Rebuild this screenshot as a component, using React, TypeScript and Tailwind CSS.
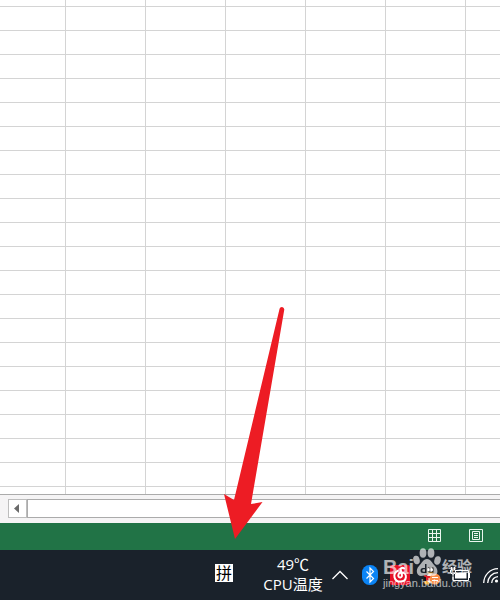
import React from 'react';

const rows = [...Array(22)].map((_, i) => (i === 0 || i === 21 ? 'h-[7px]' : 'h-6'));

function SheetGrid() {
  return (
    <table aria-label="Sheet" className="w-full table-fixed border-separate border-spacing-0 bg-white">
      <colgroup>
        <col className="w-[66px]" />
        {[...Array(5)].map((_, i) => (
          <col key={i} className="w-20" />
        ))}
        <col />
      </colgroup>
      <tbody>
        {rows.map((height, r) => (
          <tr key={r}>
            {[...Array(7)].map((_, c) => (
              <td
                key={c}
                className={`p-0 border-[#d4d4d4] ${height} ${r < 21 ? 'border-b' : ''} ${c < 6 ? 'border-r' : ''}`}
              />
            ))}
          </tr>
        ))}
      </tbody>
    </table>
  );
}

function ScrollRow() {
  return (
    <div className="flex border-t border-[#ababab] bg-[#f5f4f5] pt-1 pb-[5px] pl-2">
      <button
        type="button"
        aria-label="Scroll left"
        className="flex h-[19px] w-[19px] items-center justify-center border border-[#bdbdbd] bg-white pr-0.5"
      >
        <svg width="5" height="9" viewBox="0 0 5 9" fill="#6a6a6a">
          <path d="M5 0v9L0 4.5z" />
        </svg>
      </button>
      <div className="h-[19px] flex-1 border border-r-0 border-[#ababab] bg-white" />
    </div>
  );
}

function StatusBar() {
  return (
    <div className="flex h-[27px] items-start justify-end gap-7 bg-[#217346] pt-1.5 pr-[17px]">
      <button type="button" aria-label="Normal view">
        <svg width="13" height="13" viewBox="0 0 13 13" fill="none" stroke="#eaf6ee">
          <path d="M.5.5h12v12H.5zM4.5 0v13M8.5 0v13M0 4.5h13M0 8.5h13" />
        </svg>
      </button>
      <button type="button" aria-label="Page layout view">
        <svg width="14" height="13" viewBox="0 0 14 13" fill="none" stroke="#eaf6ee">
          <path d="M.5.5h13v12H.5zM3.5 2.5h7v8h-7zM5 4.5h4M5 6.5h4M5 8.5h4" />
        </svg>
      </button>
    </div>
  );
}

function Watermark() {
  return (
    <div className="pointer-events-none absolute right-7 bottom-[11px] w-[89px] text-white opacity-65">
      <div className="flex items-end font-['Liberation_Sans','Noto_Sans_CJK_SC',sans-serif] font-bold">
        <span className="w-[29px] text-xl leading-5">Bai</span>
        <svg width="30" height="30" viewBox="0 0 30 30" fill="currentColor">
          <ellipse cx="11" cy="6" rx="3.4" ry="4.7" />
          <ellipse cx="19" cy="6" rx="3.4" ry="4.7" />
          <ellipse cx="4.5" cy="13" rx="3.2" ry="4.3" transform="rotate(-15 4.5 13)" />
          <ellipse cx="25.5" cy="13.5" rx="3.2" ry="4.3" transform="rotate(15 25.5 13.5)" />
          <path
            fillRule="evenodd"
            d="M15 12c-4 0-5 4-8 7-4 4-2 10 2 10 3 0 3-1 6-1s3 1 6 1c5 0 6-6 2-10-3-3-4-7-8-7zM13 17h1.500v9H11a2.500 2.500 0 0 1 0-5h2zm0 5.300h-1.500a1.200 1.200 0 0 0 0 2.400H13zM16 20.500h1.500v4.200H20v-4.200h1.500V26H18a2 2 0 0 1-2-2z"
          />
        </svg>
        <span className="text-[15px] leading-5">经验</span>
      </div>
      <div className="font-['Liberation_Sans',sans-serif] text-[11px] leading-3">jingyan.baidu.com</div>
    </div>
  );
}

function TrayIcons() {
  return (
    <>
      <button type="button" aria-label="Show hidden icons" className="mt-5 ml-[9px]">
        <svg width="16" height="10" viewBox="0 0 16 10" fill="none" stroke="#fff" strokeWidth="1.3">
          <path d="M.5 9 8 1.5 15.5 9" />
        </svg>
      </button>
      <button type="button" aria-label="Bluetooth" className="mt-[15px] ml-3.5">
        <svg width="16" height="20" viewBox="0 0 16 20">
          <rect width="16" height="20" rx="7.5" fill="#0b84f5" />
          <path d="M4.5 6.5l7 7L8 17V3l3.5 3.5-7 7" fill="none" stroke="#fff" strokeWidth="1.2" />
        </svg>
      </button>
      <button type="button" aria-label="Music" className="mt-[15px] ml-3">
        <svg width="20" height="20" viewBox="0 0 20 20">
          <rect width="20" height="20" rx="2" fill="#e60f26" />
          <path
            d="M14 3.500c-1.500-1.300-3.500-.5-3.300 1.200l1.200 5.300c.6 3-3.600 3.300-3.600.5 0-2.300 2-3.300 4-3.100 5 .5 5.200 9.200-1.900 9.200-6.600 0-8.200-8.200-2.700-10.800"
            fill="none"
            stroke="#fff"
            strokeWidth="2"
            strokeLinecap="round"
          />
        </svg>
      </button>
      <button type="button" aria-label="Messages" className="mt-[15px] ml-3">
        <svg width="20" height="20" viewBox="0 0 20 20">
          <ellipse cx="8.5" cy="12" rx="6.5" ry="6.5" fill="#151515" />
          <ellipse cx="8.5" cy="6.5" rx="5" ry="5.5" fill="#151515" />
          <ellipse cx="8" cy="13.5" rx="4" ry="4.5" fill="#f4f4f4" />
          <ellipse cx="6.5" cy="4.7" rx="1.2" ry="1.7" fill="#fff" />
          <ellipse cx="9.8" cy="4.7" rx="1.2" ry="1.7" fill="#fff" />
          <path d="M4.5 7.5h7.5L8.2 9.5z" fill="#f6a623" />
          <path d="M2.5 9.5c3 2 8 2 11.5 0v2.3c-2.5 1.500-5.500 1.700-7.500 1.200v2.500H4v-3.300l-2-.7z" fill="#e3202b" />
          <path d="M2 17.5c1-2 4-2 5 .5v1.5H3z" fill="#f6a623" />
          <circle cx="13" cy="14" r="5.5" fill="#f98c45" />
          <path d="M10 12.500h6M10 15.500h6" stroke="#fff" strokeWidth="1.2" />
        </svg>
      </button>
      <button type="button" aria-label="Battery" className="mt-[17px] ml-2">
        <svg width="20" height="15" viewBox="0 0 20 15">
          <path d="M3 3.5h15.500v10H3z" fill="#1a222b" stroke="#fff" />
          <path d="M19 6h1v5h-1zM5 5.500h11.500v6H5z" fill="#fff" />
          <path d="M0 2.5h6V6L4.5 7.5V10h-3V7.5L0 6z" fill="#1a222b" />
          <path d="M1.5 0v3M4.5 0v3M.5 3h5v2.5L4 7H2L.5 5.5zM3 7v6.5" fill="none" stroke="#fff" />
        </svg>
      </button>
      <button type="button" aria-label="Wi-Fi" className="mt-[18px] ml-[13px]">
        <svg width="17" height="15" viewBox="0 0 17 15" fill="none" stroke="#fff" strokeWidth="1.3">
          <path d="M.7 15C1 7 7 .8 15 .7M4.700 15C5 9 9 4.900 15 4.700M8.700 15c.3-3.500 3-6 6.300-6.300" />
          <circle cx="13.5" cy="13" r="1.6" fill="#fff" stroke="none" />
        </svg>
      </button>
    </>
  );
}

function Taskbar() {
  return (
    <div className="relative flex h-[50px] items-start justify-end bg-[#1a222b] text-white">
      <button
        type="button"
        className="mt-3.5 mr-[30px] flex h-[18px] w-[18px] justify-center bg-white font-['Noto_Sans_CJK_SC',sans-serif] text-base leading-4 text-black"
      >
        拼
      </button>
      <div className="mt-1 w-[60px] text-center font-['Open_Sans','Noto_Sans_CJK_SC',sans-serif] text-[15px] leading-5 whitespace-nowrap">
        <div>49℃</div>
        <div>CPU温度</div>
      </div>
      <TrayIcons />
      <Watermark />
    </div>
  );
}

function Arrow() {
  return (
    <svg
      aria-hidden="true"
      className="pointer-events-none absolute top-[306px] left-[224px]"
      width="62"
      height="234"
      viewBox="0 0 62 234"
      fill="#ed1c24"
    >
      <path d="M55.5 3C56 .2 60 .2 60.3 3.500L27 198l11.500-2L11 233 0 188l10 6z" />
    </svg>
  );
}

export default function App() {
  return (
    <div className="relative overflow-hidden">
      <SheetGrid />
      <ScrollRow />
      <StatusBar />
      <Taskbar />
      <Arrow />
    </div>
  );
}
